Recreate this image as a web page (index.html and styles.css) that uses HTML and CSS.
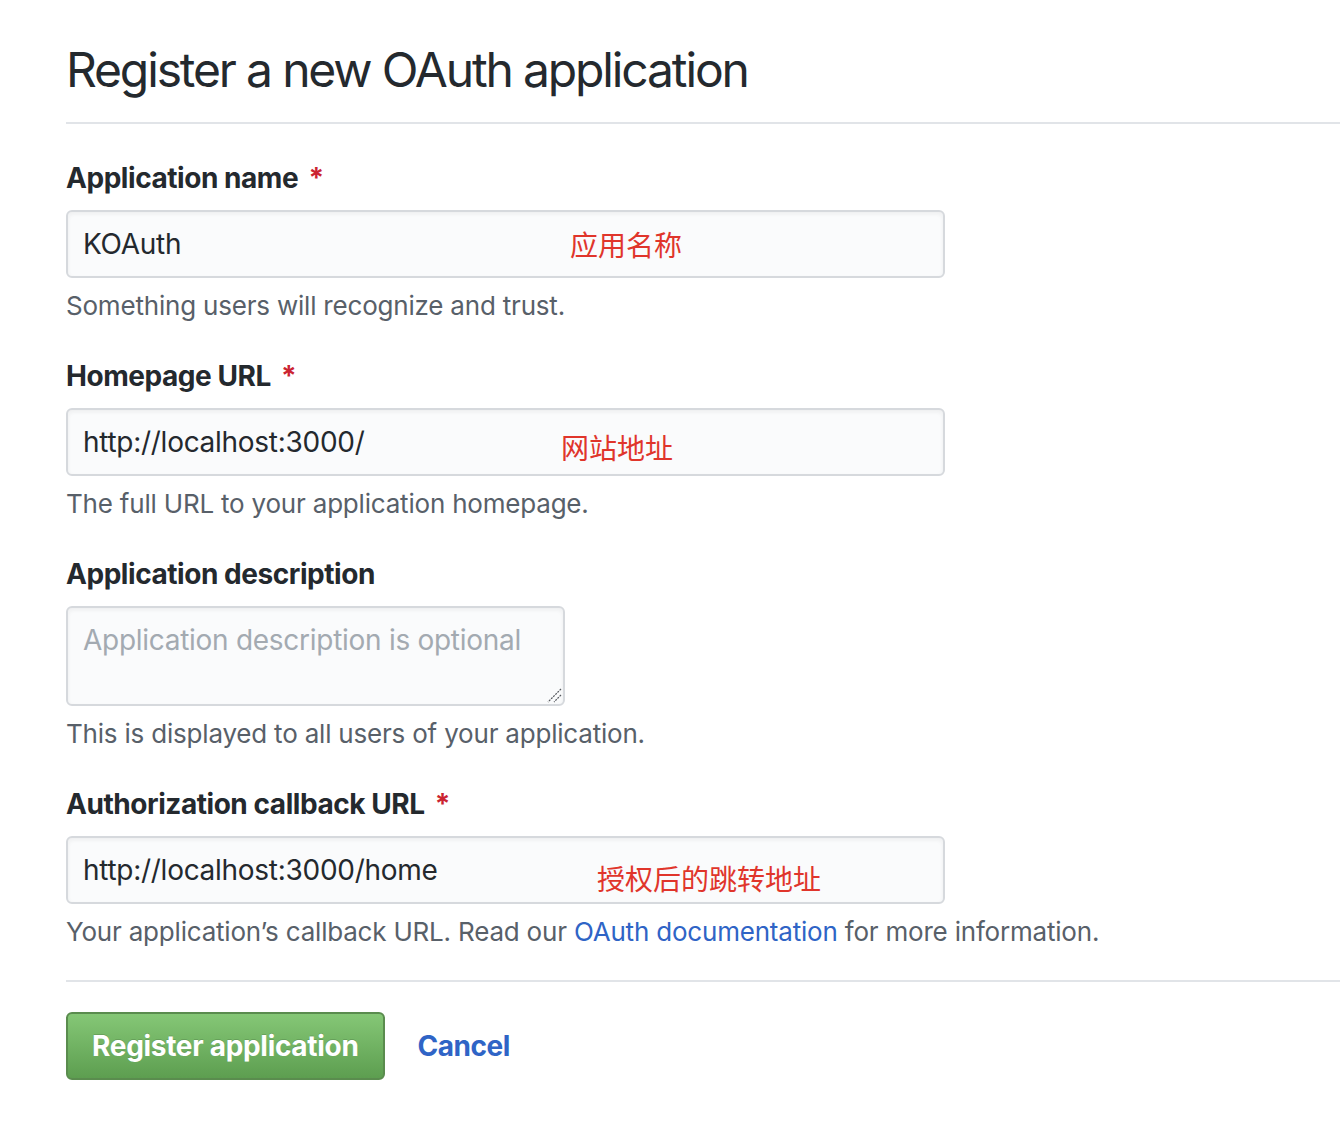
FILE: index.html
```html
<!DOCTYPE html>
<html lang="en">
<head>
<meta charset="utf-8">
<title>Register a new OAuth application</title>
<link rel="stylesheet" href="styles.css">
</head>
<body>
<div class="page">
  <h1 class="title">Register a new OAuth application</h1>
  <form class="form">
    <div class="group">
      <label class="label">Application name <span class="req">*</span></label>
      <div class="field">
        <input class="control" type="text" value="KOAuth" readonly>
        <span class="annot annot-name">应用名称</span>
      </div>
      <p class="note">Something users will recognize and trust.</p>
    </div>
    <div class="group">
      <label class="label">Homepage URL <span class="req">*</span></label>
      <div class="field">
        <input class="control" type="text" value="http://localhost:3000/" readonly>
        <span class="annot annot-home">网站地址</span>
      </div>
      <p class="note">The full URL to your application homepage.</p>
    </div>
    <div class="group">
      <label class="label">Application description</label>
      <div class="field">
        <textarea class="control area" placeholder="Application description is optional" readonly></textarea>
        <svg class="grip" width="16" height="16" viewBox="0 0 16 16" aria-hidden="true">
          <line x1="15" y1="2" x2="2" y2="15" stroke="#55595e" stroke-width="1.2" stroke-dasharray="2 1"/>
          <line x1="15" y1="8" x2="8" y2="15" stroke="#55595e" stroke-width="1.2" stroke-dasharray="2 1"/>
        </svg>
      </div>
      <p class="note">This is displayed to all users of your application.</p>
    </div>
    <div class="group last">
      <label class="label">Authorization callback URL <span class="req">*</span></label>
      <div class="field">
        <input class="control" type="text" value="http://localhost:3000/home" readonly>
        <span class="annot annot-cb">授权后的跳转地址</span>
      </div>
      <p class="note">Your application’s callback URL. Read our <a class="link" href="#">OAuth documentation</a> for more information.</p>
    </div>
    <div class="actions">
      <button class="btn-primary" type="button">Register application</button>
      <a class="cancel" href="#">Cancel</a>
    </div>
  </form>
</div>
</body>
</html>
```
FILE: styles.css
```css
* { box-sizing: border-box; }
html, body { margin: 0; padding: 0; background: #fff; }
body {
  font-family: Inter, "Liberation Sans", "Noto Sans CJK SC", sans-serif;
  color: #24292e;
}
.page {
  padding: 40px 0 40px 66px;
}
.title {
  margin: 0;
  font-size: 48px;
  line-height: 60px;
  font-weight: 400;
  letter-spacing: -2.15px;
  padding-bottom: 22px;
  border-bottom: 2px solid #e1e4e8;
}
.form {
  display: flex;
  flex-direction: column;
  padding-top: 36px;
}
.group {
  display: flex;
  flex-direction: column;
  align-items: flex-start;
  margin-bottom: 36px;
}
.label {
  font-size: 28px;
  line-height: 36px;
  font-weight: 700;
  letter-spacing: -0.45px;
  margin-bottom: 14px;
  color: #24292e;
}
.req { color: #cb2431; margin-left: 4px; }
.field { position: relative; }
.control {
  display: block;
  width: 879px;
  height: 68px;
  margin: 0;
  padding: 0 15px;
  font-family: Inter, "Liberation Sans", sans-serif;
  font-size: 28px;
  letter-spacing: -0.28px;
  color: #24292e;
  background: #fafbfc;
  border: 2px solid #d6d9dd;
  border-radius: 6px;
  box-shadow: inset 0 2px 4px rgba(27,31,35,0.06);
  outline: none;
}
.area {
  width: 499px;
  height: 100px;
  padding: 14px 15px;
  line-height: 36px;
  resize: none;
}
.area::placeholder { color: #a3aab1; }
.grip {
  position: absolute;
  right: 3px;
  bottom: 3px;
}
.annot {
  position: absolute;
  font-family: "Noto Sans CJK SC", sans-serif;
  font-size: 28px;
  line-height: 36px;
  color: #e0352b;
  white-space: nowrap;
}
.annot-name { left: 504px; top: 16px; }
.annot-home { left: 495px; top: 21px; }
.annot-cb { left: 531px; top: 24px; }
.note {
  margin: 12px 0 0;
  font-size: 26px;
  line-height: 32px;
  letter-spacing: -0.2px;
  color: #586069;
}
.link { color: #2f64c6; text-decoration: none; }
.actions {
  display: flex;
  align-items: center;
  gap: 33px;
  margin-top: -4px;
  padding-top: 30px;
  border-top: 2px solid #e1e4e8;
}
.btn-primary {
  height: 68px;
  padding: 0 24px;
  font-family: Inter, "Liberation Sans", sans-serif;
  font-size: 28px;
  font-weight: 700;
  letter-spacing: -0.3px;
  color: #fff;
  background: linear-gradient(180deg, #85c776 0%, #5d9e50 100%);
  border: 2px solid #5a8c4e;
  border-radius: 6px;
  text-shadow: 0 -1px 0 rgba(0,0,0,0.15);
}
.cancel {
  font-size: 28px;
  font-weight: 700;
  letter-spacing: -0.5px;
  color: #2f64c6;
  text-decoration: none;
}
```
